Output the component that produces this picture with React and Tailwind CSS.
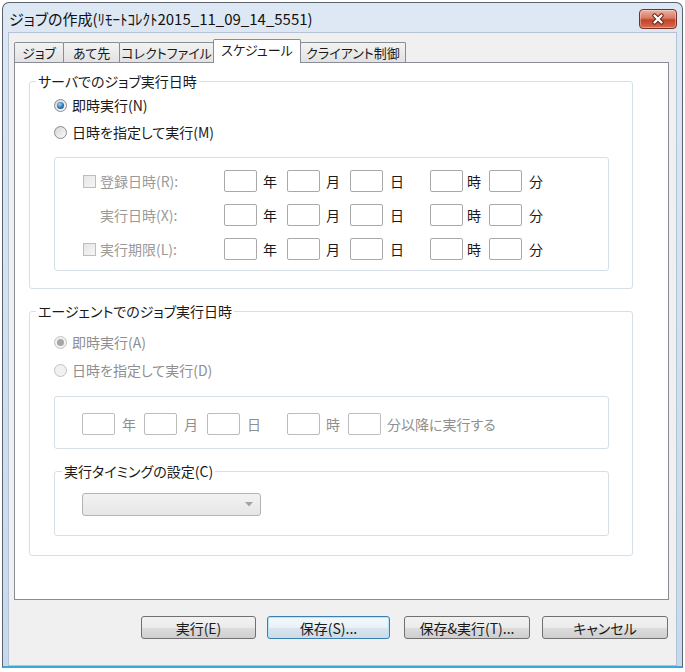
import React from 'react';

function Radio({ checked, disabled }) {
  return (
    <span
      className={`flex h-[13px] w-[13px] shrink-0 items-center justify-center rounded-full border ${
        disabled
          ? 'border-[#c2c2c2] bg-[#f1f1f1]'
          : 'border-[#8b8b8b] bg-gradient-to-br from-[#d6d6d6] to-[#fafafa]'
      }`}
    >
      {checked && (
        <span
          className={`h-[7px] w-[7px] rounded-full ${
            disabled
              ? 'bg-[#a6a6a6]'
              : 'bg-[radial-gradient(circle_at_40%_35%,#9fd6f6,#2a6fb8_55%,#174f8e)]'
          }`}
        />
      )}
    </span>
  );
}

function Checkbox() {
  return (
    <span className="block h-[13px] w-[13px] border border-[#bdbdbd] bg-gradient-to-br from-[#e6e6e6] to-[#f6f6f6]" />
  );
}

function Box({ dim }) {
  return (
    <span
      className={`block h-[22px] w-[33px] shrink-0 rounded-[2px] border bg-white ${
        dim ? 'border-[#bcbcbc]' : 'border-[#a9a9a9]'
      }`}
    />
  );
}

function DateRow({ check, label }) {
  return (
    <div className="flex h-[22px] items-center">
      <span className="flex w-[17px] shrink-0">{check && <Checkbox />}</span>
      <span className="w-[124px] shrink-0 text-[#9a9a9a]">{label}</span>
      <Box />
      <span className="ml-[6px] w-[14px] shrink-0">年</span>
      <span className="ml-[10px]"><Box /></span>
      <span className="ml-[6px] w-[14px] shrink-0">月</span>
      <span className="ml-[10px]"><Box /></span>
      <span className="ml-[7px] w-[14px] shrink-0">日</span>
      <span className="ml-[26px]"><Box /></span>
      <span className="ml-[4px] w-[14px] shrink-0">時</span>
      <span className="ml-[8px]"><Box /></span>
      <span className="ml-[7px] w-[14px] shrink-0">分</span>
    </div>
  );
}

function Button({ label, primary, cls }) {
  return (
    <div
      className={`${cls} flex h-[23px] items-center justify-center rounded-[3px] border ${
        primary
          ? 'border-[#3c7fb1] bg-[linear-gradient(#f4f8fb_0%,#e9f1f7_50%,#d9e6ef_50%,#cbdbe7_100%)] shadow-[inset_0_0_0_1px_#b9e3f8]'
          : 'border-[#707070] bg-[linear-gradient(#f2f2f2_0%,#ebebeb_50%,#dddddd_50%,#cfcfcf_100%)]'
      }`}
    >
      {label}
    </div>
  );
}

const tabs = [
  { label: 'ジョブ', cls: 'w-[50px]' },
  { label: 'あて先', cls: 'w-[57px]' },
  { label: 'コレクトファイル', cls: 'w-[95px]' },
  { label: 'スケジュール', cls: 'w-[88px]', active: true },
  { label: 'クライアント制御', cls: 'w-[106px]' },
];

export default function App() {
  return (
    <div className="h-[672px] w-[685px] bg-white px-[2px] pt-[2px] font-['Noto_Sans_CJK_JP',sans-serif] text-[14px] leading-[18px] text-[#1a1a1a] [font-feature-settings:'palt']">
      <div className="flex h-[666px] flex-col rounded-t-[7px] border border-b-2 border-[#59626d] border-b-[#3ba7dc] bg-gradient-to-b from-[#dde8f4] to-[#c7d9ed] px-[5px]">
        {/* title bar */}
        <div className="flex h-[29px] shrink-0 items-center justify-between pt-[2px]">
          <span className="pl-[1px] text-[15px] text-[#111]">ジョブの作成(ﾘﾓｰﾄｺﾚｸﾄ2015_11_09_14_5551)</span>
          <div className="flex h-[20px] w-[38px] items-center justify-center rounded-[4px] border border-[#7a2d21] bg-[linear-gradient(#ebb3a3,#d97a62_45%,#c2432a_55%,#d66c50)] shadow-[inset_0_0_0_1px_rgba(255,255,255,0.35)]">
            <svg width="14" height="12" viewBox="0 0 14 12">
              <path d="M3.5 2.5 L10.5 9.5 M10.5 2.5 L3.5 9.5" stroke="#5a2218" strokeWidth="4.2" strokeLinecap="round" />
              <path d="M3.5 2.5 L10.5 9.5 M10.5 2.5 L3.5 9.5" stroke="#ffffff" strokeWidth="2.4" strokeLinecap="round" />
            </svg>
          </div>
        </div>

        {/* client */}
        <div className="flex flex-1 flex-col border border-[#b3c2d4] bg-[#f0f0f0] pl-[5px] pr-[7px] pt-[6px]">
          {/* tabs */}
          <div className="flex h-[23px] items-end text-[13px]">
            {tabs.map((t, i) => (
              <div
                key={t.label}
                className={`${t.cls} ${i > 0 ? '-ml-px' : ''} flex items-center justify-center whitespace-nowrap rounded-t-[2px] border border-b-0 border-[#898c95] ${
                  t.active
                    ? 'relative z-10 -mb-px h-[24px] bg-white pb-[3px]'
                    : 'h-[20px] bg-gradient-to-b from-[#f3f3f3] to-[#e2e2e2]'
                }`}
              >
                {t.label}
              </div>
            ))}
          </div>

          {/* panel */}
          <div className="h-[538px] border border-[#898c95] bg-white pl-[14px] pr-[35px] pt-[9px]">
            <fieldset className="rounded-[3px] border border-[#d5dfe5]">
              <legend className="ml-[6px] px-[2px]">サーバでのジョブ実行日時</legend>
              <div className="flex flex-col pb-[17px] pl-[24px] pr-[23px]">
                <div className="mt-[6px] flex h-[18px] items-center">
                  <Radio checked />
                  <span className="ml-[5px]">即時実行(N)</span>
                </div>
                <div className="mt-[9px] flex h-[18px] items-center">
                  <Radio />
                  <span className="ml-[5px]">日時を指定して実行(M)</span>
                </div>
                <div className="mt-[16px] flex flex-col gap-[12px] rounded-[3px] border border-[#d5dfe5] pb-[10px] pl-[28px] pt-[12px]">
                  <DateRow check label="登録日時(R):" />
                  <DateRow label="実行日時(X):" />
                  <DateRow check label="実行期限(L):" />
                </div>
              </div>
            </fieldset>

            <fieldset className="mt-[13px] rounded-[3px] border border-[#d5dfe5]">
              <legend className="ml-[6px] px-[2px]">エージェントでのジョブ実行日時</legend>
              <div className="flex flex-col pb-[19px] pl-[24px] pr-[23px]">
                <div className="mt-[13px] flex h-[18px] items-center text-[#8f8f8f]">
                  <Radio checked disabled />
                  <span className="ml-[5px]">即時実行(A)</span>
                </div>
                <div className="mt-[10px] flex h-[18px] items-center text-[#8f8f8f]">
                  <Radio disabled />
                  <span className="ml-[5px]">日時を指定して実行(D)</span>
                </div>
                <div className="mt-[17px] flex items-center rounded-[3px] border border-[#d5dfe5] pb-[13px] pl-[27px] pt-[16px] text-[#8f8f8f]">
                  <Box dim />
                  <span className="ml-[7px] w-[14px] shrink-0">年</span>
                  <span className="ml-[8px]"><Box dim /></span>
                  <span className="ml-[7px] w-[14px] shrink-0">月</span>
                  <span className="ml-[9px]"><Box dim /></span>
                  <span className="ml-[7px] w-[14px] shrink-0">日</span>
                  <span className="ml-[26px]"><Box dim /></span>
                  <span className="ml-[6px] w-[14px] shrink-0">時</span>
                  <span className="ml-[8px]"><Box dim /></span>
                  <span className="ml-[6px]">分以降に実行する</span>
                </div>
                <fieldset className="mt-[13px] rounded-[3px] border border-[#d5dfe5]">
                  <legend className="ml-[7px] px-[2px]">実行タイミングの設定(C)</legend>
                  <div className="pb-[19px] pl-[27px] pt-[13px]">
                    <div className="flex h-[23px] w-[179px] items-center justify-end rounded-[3px] border border-[#b3b3b3] bg-gradient-to-b from-[#f2f2f2] to-[#e6e6e6] pr-[7px]">
                      <svg width="8" height="5" viewBox="0 0 8 5">
                        <path d="M0 0 H8 L4 4.5 Z" fill="#a3a3a3" />
                      </svg>
                    </div>
                  </div>
                </fieldset>
              </div>
            </fieldset>
          </div>

          {/* buttons */}
          <div className="mt-[16px] flex justify-end pr-[1px]">
            <Button label="実行(E)" cls="w-[115px]" />
            <Button label="保存(S)..." primary cls="ml-[11px] w-[123px]" />
            <Button label="保存&実行(T)..." cls="ml-[14px] w-[126px]" />
            <Button label="キャンセル" cls="ml-[12px] w-[126px]" />
          </div>
        </div>
      </div>
    </div>
  );
}
